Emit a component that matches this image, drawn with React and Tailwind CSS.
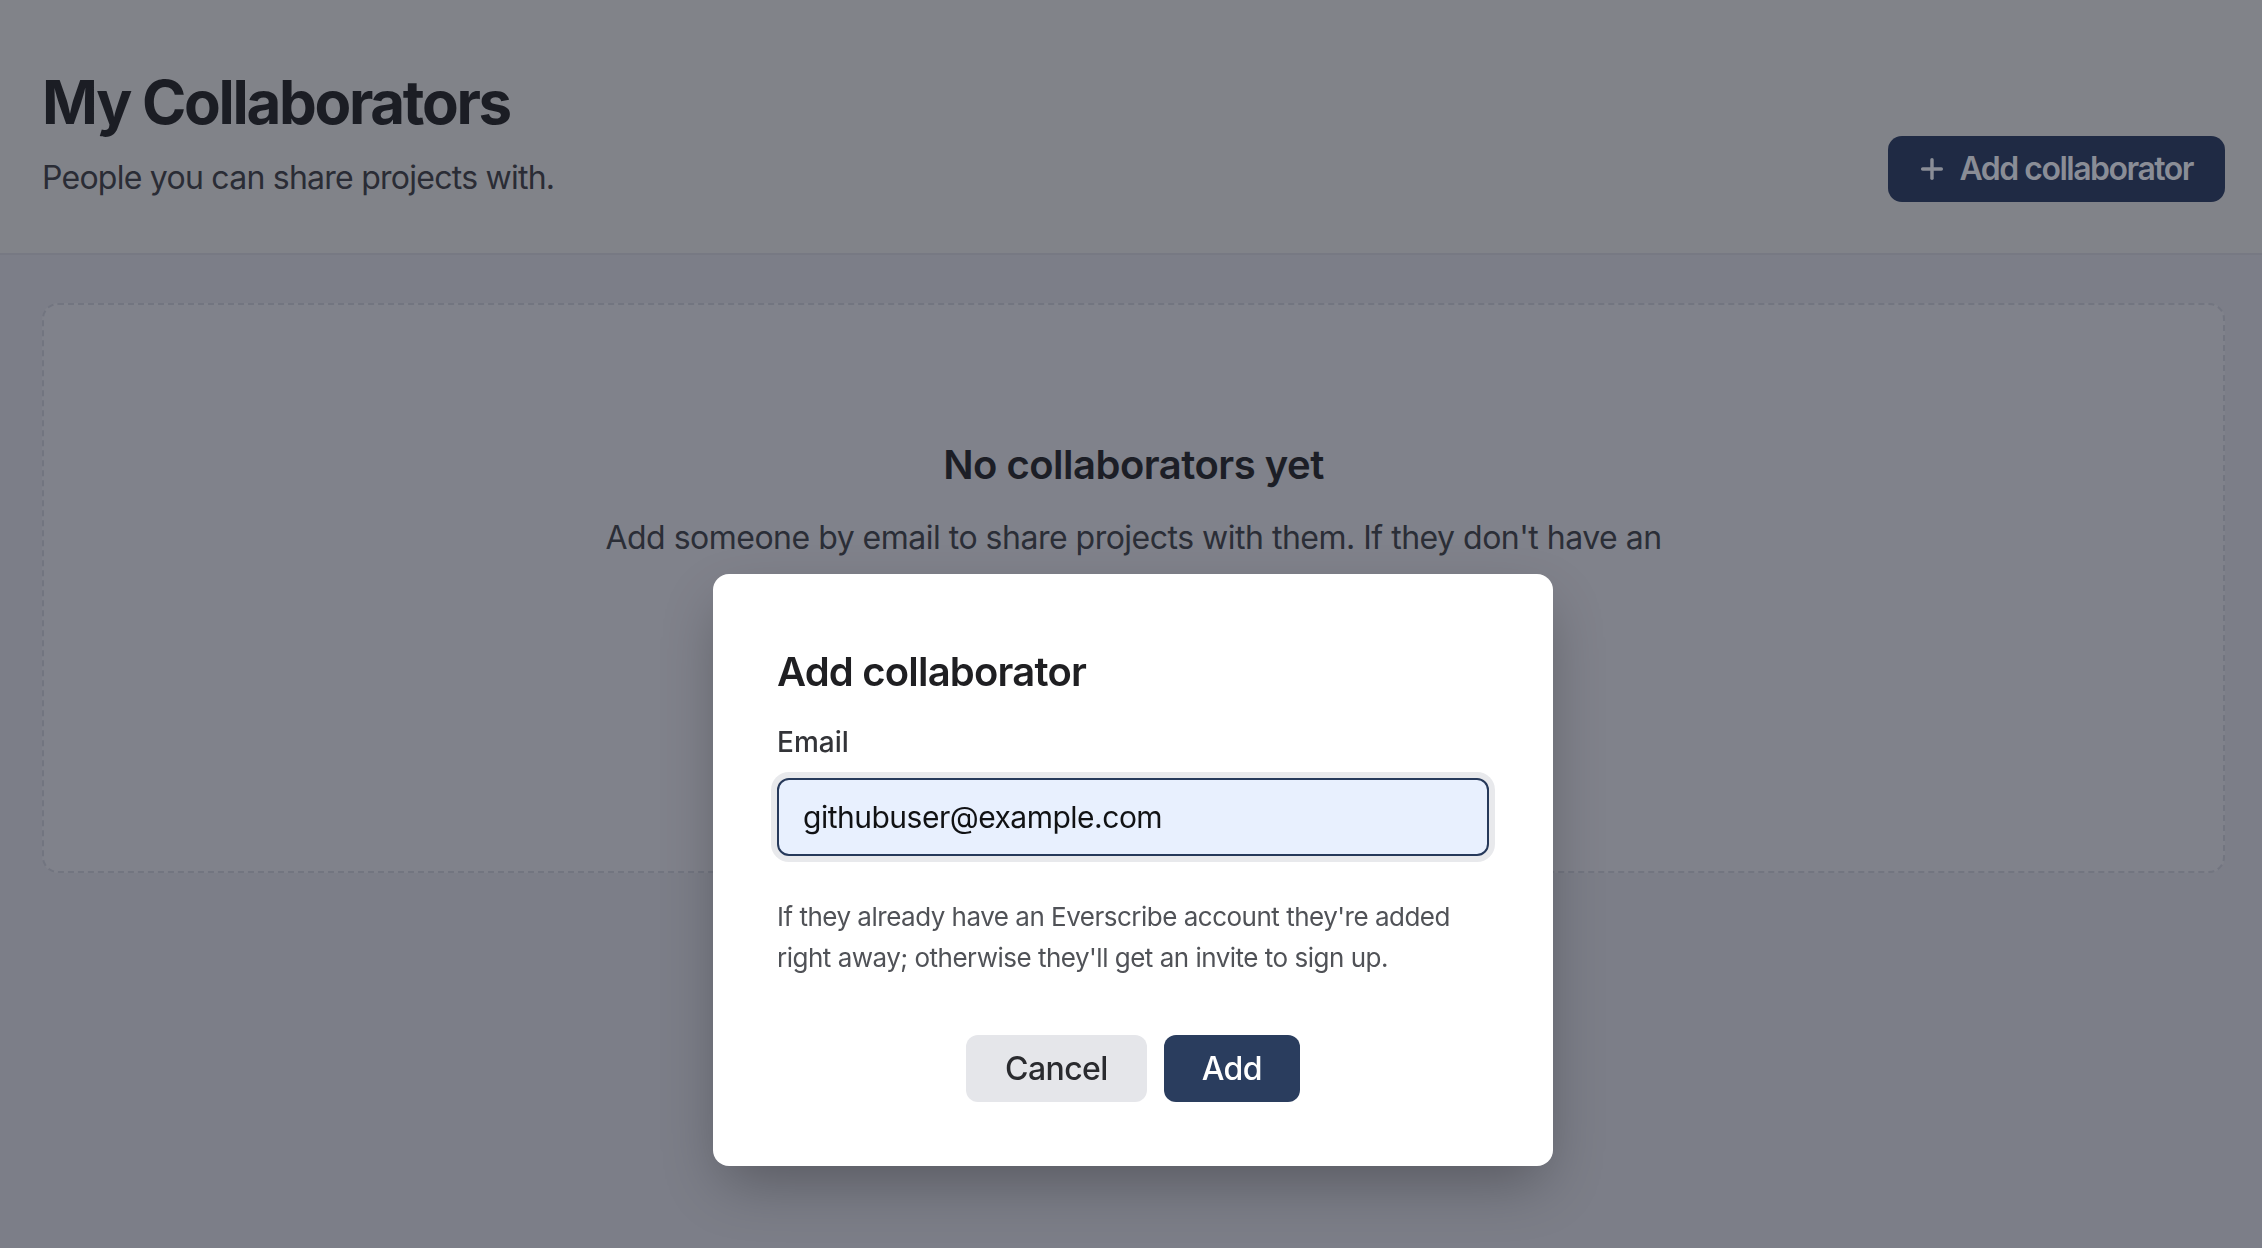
// Collaborators page with the "Add collaborator" dialog open
import { Plus } from "lucide-react";

const FONT = { fontFamily: "Inter, 'Noto Sans', sans-serif" };

function HeaderButton({ className = "" }) {
  return (
    <button
      className={`flex h-[66px] items-center gap-3 rounded-[14px] bg-[#1f2a44] pl-7 pr-8 text-[32px] font-semibold tracking-[-1.5px] text-[#8a8d96] ${className}`}
    >
      <Plus size={32} strokeWidth={2.6} />
      Add collaborator
    </button>
  );
}

function Header() {
  return (
    <header className="flex items-end justify-between border-b-2 border-[#777983] bg-[#818389] pl-[42px] pr-[37px] pt-[66px] pb-[51px]">
      <div>
        <h1 className="text-[60px] leading-[72px] font-bold tracking-[-2.3px] text-[#1b1d24]">
          My Collaborators
        </h1>
        <p className="mt-4 text-[32px] leading-[48px] tracking-[-0.75px] text-[#2a2c35]">
          People you can share projects with.
        </p>
      </div>
      <HeaderButton />
    </header>
  );
}

function EmptyState() {
  return (
    <div className="pl-[42px] pr-[37px] pt-12">
      <div className="flex h-[570px] flex-col items-center rounded-2xl border-2 border-dashed border-[#727580] bg-[#80828b] pt-[132px] text-center">
        <h2 className="text-[40px] leading-[56px] font-semibold tracking-[-0.5px] text-[#1c1e26]">
          No collaborators yet
        </h2>
        <p className="mt-[16px] max-w-[1152px] text-[32px] leading-[58px] tracking-[-0.5px] text-[#2b2e37]">
          Add someone by email to share projects with them. If they don't have an
          account, we'll send them an invite to join Everscribe.
        </p>
        <HeaderButton className="mt-10" />
      </div>
    </div>
  );
}

function AddDialog() {
  return (
    <div className="fixed inset-0 flex justify-center pt-[574px] pl-[4px]">
      <div className="h-[592px] w-[840px] rounded-2xl bg-white px-16 pt-16 pb-16 shadow-[0_24px_60px_-10px_rgba(0,0,0,0.3)]">
        <h3 className="text-[40px] leading-[68px] font-semibold tracking-[-0.8px] text-[#1f1f22]">
          Add collaborator
        </h3>
        <label className="mt-4 block text-[28px] leading-[40px] font-medium text-[#333438]">
          Email
        </label>
        <input
          readOnly
          value="githubuser@example.com"
          className="mt-4 block h-[78px] w-full rounded-xl border-2 border-[#26395a] bg-[#e8f0fe] px-[24px] text-[30px] tracking-[-0.5px] text-[#111214] outline-none ring-[6px] ring-[#e8e9ec]"
          style={FONT}
        />
        <p className="mt-10 text-[26px] leading-[41px] tracking-[-0.5px] text-[#505257]">
          If they already have an Everscribe account they're added right away; otherwise
          they'll get an invite to sign up.
        </p>
        <div className="mt-[57px] flex justify-center gap-[17px]">
          <button className="h-[67px] rounded-xl bg-[#e5e6ea] px-[39px] text-[32px] font-medium tracking-[-0.6px] text-[#2a2b2f]">
            Cancel
          </button>
          <button className="h-[67px] rounded-xl bg-[#2a3d5e] px-[38px] text-[32px] font-medium tracking-[-0.6px] text-white">
            Add
          </button>
        </div>
      </div>
    </div>
  );
}

export default function App() {
  return (
    <div className="min-h-screen bg-[#7c7e88]" style={FONT}>
      <Header />
      <EmptyState />
      <AddDialog />
    </div>
  );
}
